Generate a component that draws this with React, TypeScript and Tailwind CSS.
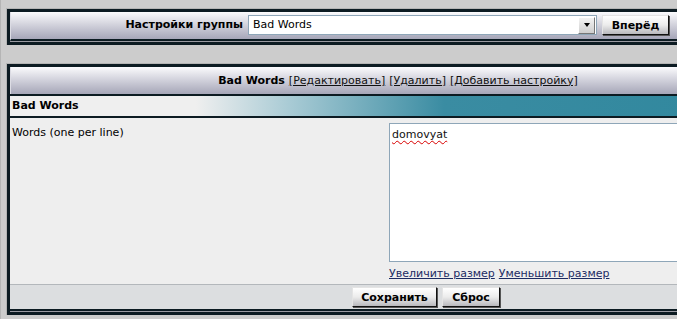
import React from "react";

const Btn = ({ children, w }: { children: React.ReactNode; w: string }) => (
  <button
    className={`${w} h-[20px] border border-t-[#e4e4e4] border-l-[#e4e4e4] border-r-[#111] border-b-[#111] bg-gradient-to-b from-white via-[#ececec] to-[#b9b9bd] shadow-[1px_1px_0_#555] text-[11px] font-bold leading-none text-black`}
  >
    {children}
  </button>
);

export default function App() {
  return (
    <div className="w-[677px] h-[319px] overflow-hidden bg-[#cccccc] border-l border-[#b5b5b5] pl-[5px] pt-[8px] font-['DejaVu_Sans',Verdana,sans-serif] text-[11px] text-black">
      {/* group settings bar */}
      <div className="w-[782px] border-t border-l border-[#b4b4b4]">
        <div className="border-[3px] border-[#0c1b22] bg-[#9a9aa2] pb-px">
          <div className="h-[29px] border-b-2 border-[#0c1b22] border-l border-l-[#dcdce4] bg-gradient-to-b from-[#fbfbfd] to-[#a6a6b8] flex items-center">
            <div className="w-[232px] text-right font-bold">Настройки группы</div>
            <div className="ml-[5px] w-[349px] h-[20px] mt-[-1px] bg-white border border-[#8ea6b8] flex items-center">
              <span className="pl-[4px] flex-1">Bad Words</span>
              <span className="w-[17px] h-[17px] mr-px bg-gradient-to-b from-[#f2f2f2] to-[#cfcfcf] border border-t-white border-l-white border-r-[#777] border-b-[#777] flex items-center justify-center">
                <span className="w-0 h-0 border-l-[3px] border-r-[3px] border-t-[4px] border-l-transparent border-r-transparent border-t-black" />
              </span>
            </div>
            <div className="ml-[5px] mt-[-1px]">
              <Btn w="w-[67px]">Вперёд</Btn>
            </div>
          </div>
        </div>
      </div>

      {/* settings panel */}
      <div className="mt-[18px] w-[782px] border-t border-l border-[#b4b4b4]">
        <div className="border-[3px] border-[#0c1b22] bg-[#9a9aa2] pb-px">
          <div className="h-[27px] bg-gradient-to-b from-[#fbfbfd] to-[#a6a6b8] border-l border-[#dcdce4] flex items-center justify-center gap-[4px] pt-px">
            <span className="font-bold">Bad Words</span>
            <a className="underline text-[#111]">[Редактировать]</a>
            <a className="underline text-[#111]">[Удалить]</a>
            <a className="underline text-[#111]">[Добавить настройку]</a>
          </div>
          <div className="h-[24px] border-y-2 border-[#0c1b22] bg-[linear-gradient(to_right,#efefef_24%,#a9cbd5_36%,#3a8ca2_56%,#2f879d)] flex items-center pl-[2px]">
            <span className="font-bold">Bad Words</span>
          </div>
          <div className="bg-[#eeeeee] flex h-[167px] border-b border-[#b3b7bb]">
            <div className="w-[379px] shrink-0 pl-[2px] pt-[7px]">Words (one per line)</div>
            <div className="pt-[5px]">
              <div className="w-[380px] h-[139px] bg-white border border-[#8ea6b8] px-[2px] pt-[3px]">
                <span className="underline decoration-wavy decoration-[#d80000] decoration-1 underline-offset-2 text-[#111]">
                  domovyat
                </span>
              </div>
              <div className="mt-[4px] flex gap-[4px] text-[#1c2b63]">
                <a className="underline">Увеличить размер</a>
                <a className="underline">Уменьшить размер</a>
              </div>
            </div>
          </div>
          <div className="h-[26px] bg-[#dcdee0] border-b-2 border-[#0c1b22] flex items-center pl-[342px] gap-[5px]">
            <Btn w="w-[85px]">Сохранить</Btn>
            <Btn w="w-[58px]">Сброс</Btn>
          </div>
        </div>
      </div>
    </div>
  );
}
